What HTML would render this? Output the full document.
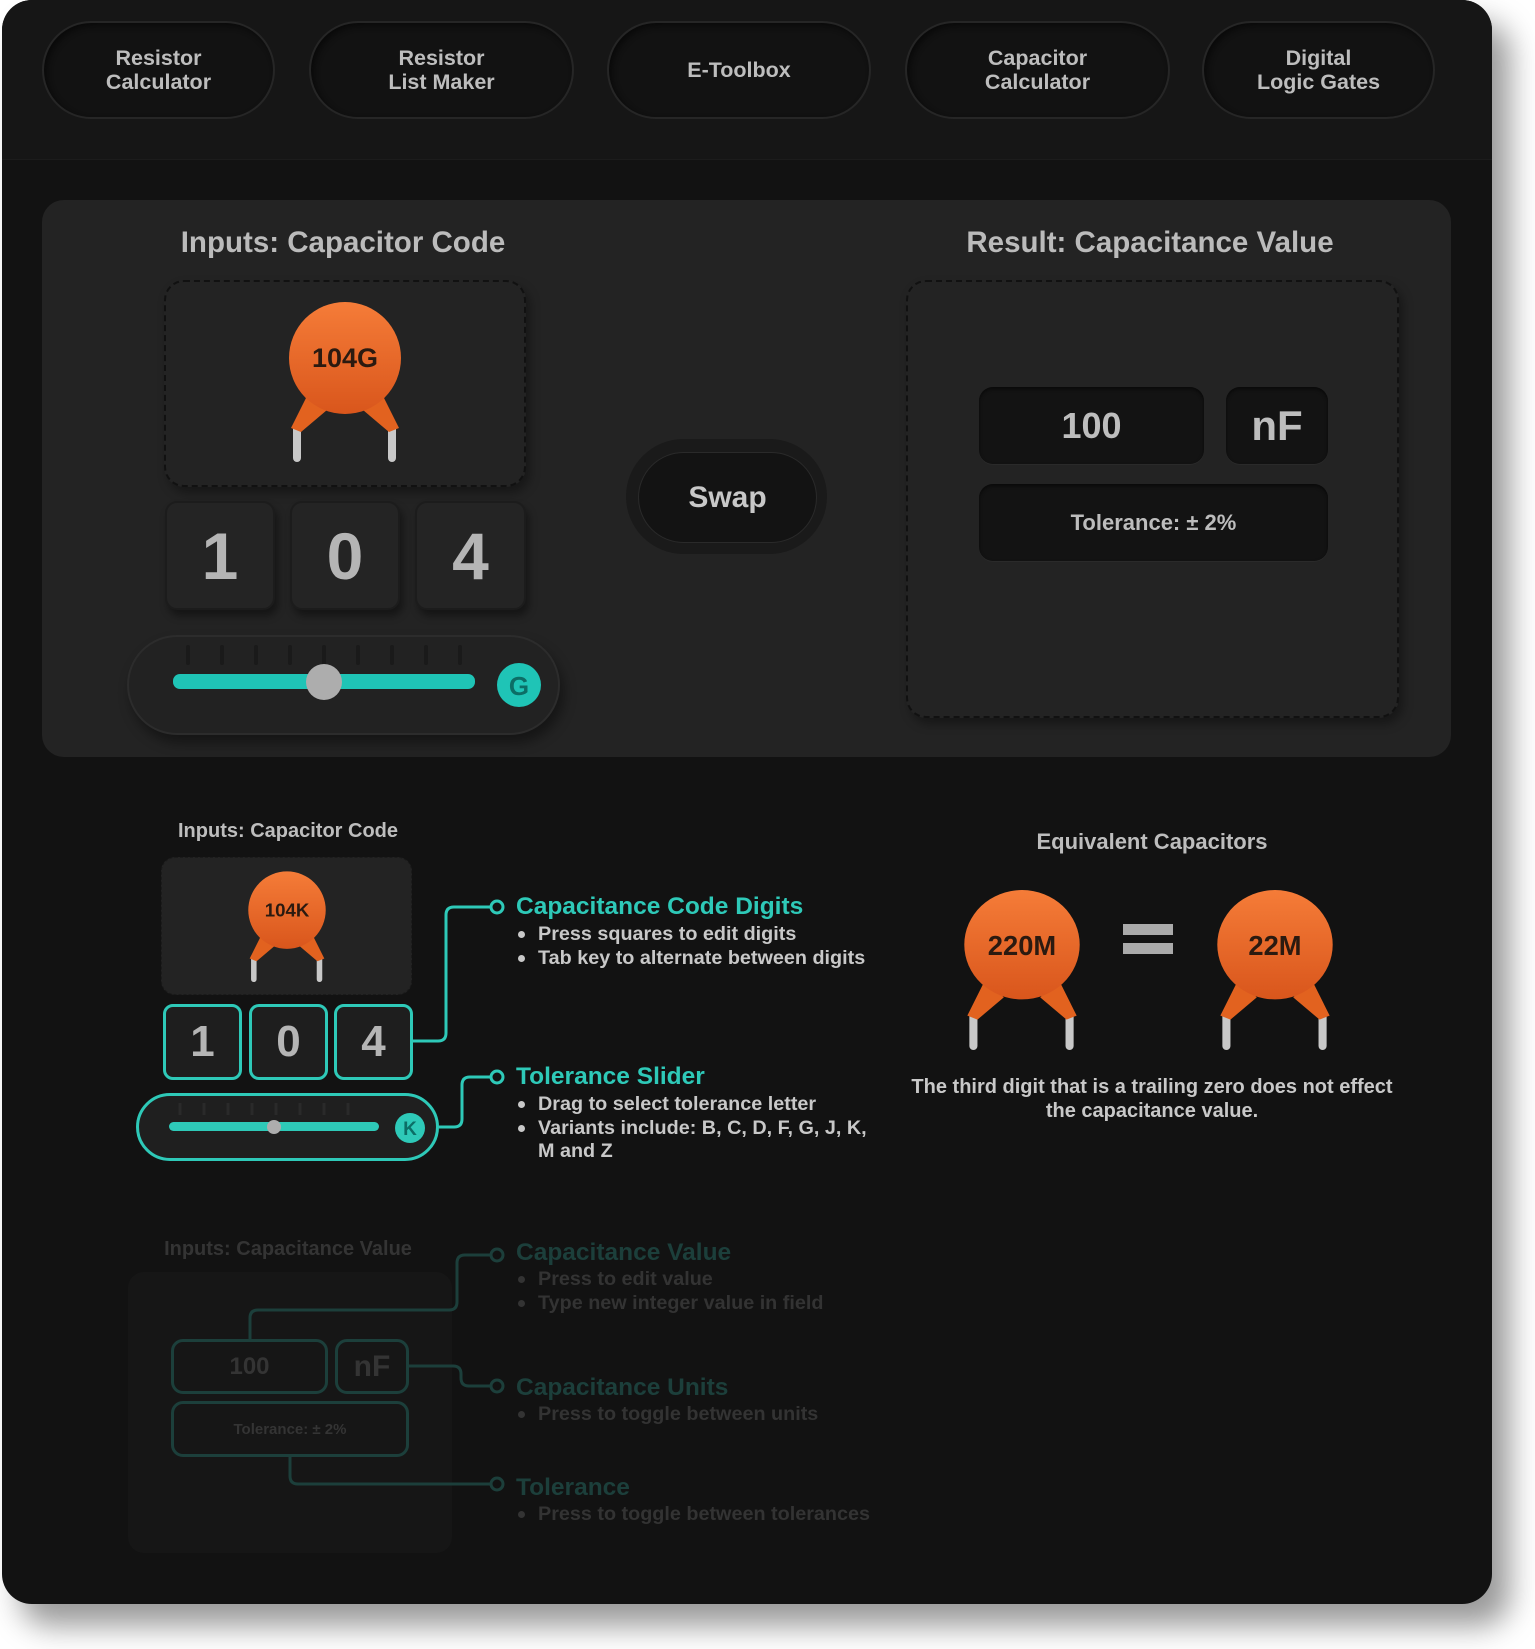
<!DOCTYPE html>
<html><head><meta charset="utf-8"><style>
*{margin:0;padding:0;box-sizing:border-box}
body{width:1535px;height:1649px;background:#fff;position:relative;overflow:hidden;font-family:"Liberation Sans",Arial,sans-serif;font-weight:bold}
.a{position:absolute}
#win{left:2px;top:0;width:1490px;height:1604px;background:#121212;border-radius:30px;overflow:hidden;box-shadow:18px 22px 30px rgba(0,0,0,.4)}
#hdr{left:0;top:0;width:1490px;height:160px;background:#161616;border-bottom:1px solid #1c1c1c}
.nav{position:absolute;top:21px;height:98px;border-radius:49px;background:#121212;border:2px solid #262626;color:#bdbdbd;font-size:21.5px;line-height:24px;display:flex;align-items:center;justify-content:center;text-align:center;box-shadow:inset 3px 3px 6px #0a0a0a}
.c{color:#bdbdbd;text-align:center}
.box{position:absolute;background:#232323;border:2px dashed #111;border-radius:20px;box-shadow:4px 6px 10px rgba(0,0,0,.35)}
.dig{position:absolute;background:#242424;border:2px solid #1c1c1c;border-radius:12px;color:#b5b5b5;font-size:66px;display:flex;align-items:center;justify-content:center;box-shadow:3px 6px 8px rgba(0,0,0,.4)}
.fld{position:absolute;background:#131313;border-radius:14px;color:#bdbdbd;display:flex;align-items:center;justify-content:center;box-shadow:inset 0 2px 3px #0a0a0a,0 1px 0 #2a2a2a}
.tl{position:absolute;color:#2ec9b8;font-size:24.5px}
.bl{position:absolute;color:#c8c8c8;font-size:19.8px;line-height:23.5px}
.bl div{position:relative}
.bl div::before{content:"";position:absolute;left:-20px;top:8px;width:7px;height:7px;border-radius:50%;background:currentColor}
.sd{position:absolute;border:3px solid #2ec9b8;border-radius:10px;color:#b5b5b5;font-size:44px;display:flex;align-items:center;justify-content:center;background:#1e1e1e}
.fd{color:#343434}
</style></head><body>
<div id="win" class="a">
<div id="hdr" class="a"></div>
<div class="nav" style="left:40px;width:233px">Resistor<br>Calculator</div>
<div class="nav" style="left:307px;width:265px">Resistor<br>List Maker</div>
<div class="nav" style="left:605px;width:264px">E-Toolbox</div>
<div class="nav" style="left:903px;width:265px">Capacitor<br>Calculator</div>
<div class="nav" style="left:1200px;width:233px">Digital<br>Logic Gates</div>

<div class="a" style="left:40px;top:200px;width:1409px;height:557px;background:#232323;border-radius:22px"></div>
<div class="a c" style="left:40px;width:602px;top:226px;font-size:29.5px;color:#bbb">Inputs: Capacitor Code</div>
<div class="a c" style="left:845px;width:606px;top:226px;font-size:29.5px;color:#bbb">Result: Capacitance Value</div>

<div class="box" style="left:162px;top:280px;width:362px;height:207px"></div>
<svg class="a" style="left:283px;top:300px" width="120" height="162" viewBox="0 0 120 162">
<defs><linearGradient id="og" x1="0" y1="0" x2="0" y2="1"><stop offset="0" stop-color="#f57c38"/><stop offset="1" stop-color="#d9561c"/></linearGradient></defs>
<rect x="8" y="124" width="8" height="38" rx="4" fill="#c8c8c8"/><rect x="103" y="124" width="8" height="38" rx="4" fill="#c8c8c8"/>
<polygon points="24,92 42,110 16,132 6,128" fill="#e2621f"/><polygon points="96,92 78,110 104,132 114,128" fill="#e2621f"/>
<circle cx="60" cy="58" r="56" fill="url(#og)"/>
<text x="60" y="67" text-anchor="middle" font-family="Liberation Sans" font-weight="bold" font-size="27" fill="#2b1a10">104G</text></svg>

<div class="dig" style="left:163px;top:501px;width:110px;height:109px">1</div>
<div class="dig" style="left:288px;top:501px;width:110px;height:109px">0</div>
<div class="dig" style="left:413px;top:501px;width:111px;height:109px">4</div>

<div class="a" style="left:125px;top:635px;width:433px;height:100px;border-radius:50px;background:#222;border:2px solid #2c2c2c;box-shadow:4px 8px 12px rgba(0,0,0,.4)"></div>
<svg class="a" style="left:125px;top:635px" width="433" height="100">
<g stroke="#1a1a1a" stroke-width="4" stroke-linecap="round">
<line x1="61" y1="12" x2="61" y2="28"/><line x1="95" y1="12" x2="95" y2="28"/><line x1="129" y1="12" x2="129" y2="28"/><line x1="163" y1="12" x2="163" y2="28"/><line x1="197" y1="12" x2="197" y2="28"/><line x1="231" y1="12" x2="231" y2="28"/><line x1="265" y1="12" x2="265" y2="28"/><line x1="299" y1="12" x2="299" y2="28"/><line x1="333" y1="12" x2="333" y2="28"/></g>
<rect x="46" y="39" width="302" height="15" rx="7" fill="#1fc4b6"/>
<circle cx="197" cy="47" r="18" fill="#adadad"/>
<circle cx="392" cy="50" r="22" fill="#1fc4b6"/>
<text x="392" y="60" text-anchor="middle" font-family="Liberation Sans" font-weight="bold" font-size="26" fill="#0c6e66">G</text></svg>

<div class="a" style="left:624px;top:439px;width:201px;height:115px;border-radius:58px;background:#1a1a1a"></div>
<div class="a" style="left:636px;top:452px;width:179px;height:91px;border-radius:46px;background:#131313;border:1px solid #2a2a2a;color:#c8c8c8;font-size:30px;display:flex;align-items:center;justify-content:center">Swap</div>

<div class="box" style="left:904px;top:280px;width:493px;height:438px"></div>
<div class="fld" style="left:977px;top:387px;width:225px;height:77px;font-size:36px">100</div>
<div class="fld" style="left:1224px;top:387px;width:102px;height:77px;font-size:42px">nF</div>
<div class="fld" style="left:977px;top:484px;width:349px;height:77px;font-size:22px">Tolerance: ± 2%</div>

<!-- help section -->
<div class="a c" style="left:124px;width:324px;top:820px;font-size:20px">Inputs: Capacitor Code</div>
<div class="a" style="left:159px;top:857px;width:251px;height:138px;background:#232323;border-radius:14px;border:1px dashed #1a1a1a"></div>
<svg class="a" style="left:243px;top:870px" width="84" height="112" viewBox="0 0 120 162">
<rect x="8" y="124" width="8" height="38" rx="4" fill="#c8c8c8"/><rect x="103" y="124" width="8" height="38" rx="4" fill="#c8c8c8"/>
<polygon points="24,92 42,110 16,132 6,128" fill="#e2621f"/><polygon points="96,92 78,110 104,132 114,128" fill="#e2621f"/>
<circle cx="60" cy="58" r="56" fill="url(#og)"/>
<text x="60" y="67" text-anchor="middle" font-family="Liberation Sans" font-weight="bold" font-size="27" fill="#2b1a10">104K</text></svg>
<div class="sd" style="left:161px;top:1004px;width:79px;height:76px">1</div>
<div class="sd" style="left:247px;top:1004px;width:79px;height:76px">0</div>
<div class="sd" style="left:332px;top:1004px;width:79px;height:76px">4</div>
<div class="a" style="left:134px;top:1093px;width:303px;height:68px;border:3px solid #2ec9b8;border-radius:34px;background:#1f1f1f"></div>
<svg class="a" style="left:134px;top:1093px" width="303" height="68">
<g stroke="#2a2a2a" stroke-width="3"><line x1="44" y1="10" x2="44" y2="22"/><line x1="68" y1="10" x2="68" y2="22"/><line x1="92" y1="10" x2="92" y2="22"/><line x1="116" y1="10" x2="116" y2="22"/><line x1="140" y1="10" x2="140" y2="22"/><line x1="164" y1="10" x2="164" y2="22"/><line x1="188" y1="10" x2="188" y2="22"/><line x1="212" y1="10" x2="212" y2="22"/></g>
<rect x="33" y="29" width="210" height="9" rx="4.5" fill="#2ec9b8"/><circle cx="138" cy="34" r="7" fill="#adadad"/>
<circle cx="274" cy="35" r="15" fill="#2ec9b8"/><text x="274" y="42" text-anchor="middle" font-family="Liberation Sans" font-weight="bold" font-size="19" fill="#0c6e66">K</text></svg>

<div class="tl" style="left:514px;top:893px">Capacitance Code Digits</div>
<div class="bl" style="left:536px;top:923px"><div>Press squares to edit digits</div><div>Tab key to alternate between digits</div></div>
<div class="tl" style="left:514px;top:1063px">Tolerance Slider</div>
<div class="bl" style="left:536px;top:1093px;width:350px"><div>Drag to select tolerance letter</div><div>Variants include: B, C, D, F, G, J, K,<br>M and Z</div></div>

<div class="a c" style="left:900px;width:500px;top:829px;font-size:22px">Equivalent Capacitors</div>
<svg class="a" style="left:958px;top:886px" width="124" height="164" viewBox="0 0 120 162">
<rect x="8" y="124" width="8" height="38" rx="4" fill="#c8c8c8"/><rect x="103" y="124" width="8" height="38" rx="4" fill="#c8c8c8"/>
<polygon points="24,92 42,110 16,132 6,128" fill="#e2621f"/><polygon points="96,92 78,110 104,132 114,128" fill="#e2621f"/>
<ellipse cx="60" cy="58" rx="57" ry="54" fill="url(#og)"/>
<text x="60" y="68" text-anchor="middle" font-family="Liberation Sans" font-weight="bold" font-size="27" fill="#2b1a10">220M</text></svg>
<div class="a" style="left:1121px;top:924px;width:50px;height:11px;background:#aaa"></div>
<div class="a" style="left:1121px;top:943px;width:50px;height:11px;background:#aaa"></div>
<svg class="a" style="left:1211px;top:886px" width="124" height="164" viewBox="0 0 120 162">
<rect x="8" y="124" width="8" height="38" rx="4" fill="#c8c8c8"/><rect x="103" y="124" width="8" height="38" rx="4" fill="#c8c8c8"/>
<polygon points="24,92 42,110 16,132 6,128" fill="#e2621f"/><polygon points="96,92 78,110 104,132 114,128" fill="#e2621f"/>
<ellipse cx="60" cy="58" rx="57" ry="54" fill="url(#og)"/>
<text x="60" y="68" text-anchor="middle" font-family="Liberation Sans" font-weight="bold" font-size="27" fill="#2b1a10">22M</text></svg>
<div class="a c" style="left:870px;width:560px;top:1075px;font-size:20px;line-height:24px;color:#c8c8c8">The third digit that is a trailing zero does not effect<br>the capacitance value.</div>

<!-- faded -->
<div class="a c fd" style="left:124px;width:324px;top:1238px;font-size:20px">Inputs: Capacitance Value</div>
<div class="a" style="left:126px;top:1272px;width:324px;height:281px;background:#161616;border-radius:16px"></div>
<svg class="a" style="left:0;top:0" width="1490" height="1604">
<g fill="none" stroke="#2ec9b8" stroke-width="3">
<path d="M411 1041 H436 Q444 1041 444 1033 V915 Q444 907 452 907 H489"/><circle cx="495" cy="907" r="6"/>
<path d="M437 1127 H452 Q460 1127 460 1119 V1085 Q460 1077 468 1077 H489"/><circle cx="495" cy="1077" r="6"/>
</g>
<g fill="none" stroke="#1c3f3b" stroke-width="3">
<path d="M248 1339 V1318 Q248 1310 256 1310 H447 Q455 1310 455 1302 V1263 Q455 1255 463 1255 H489"/><circle cx="495" cy="1255" r="6"/>
<path d="M407 1366 H451 Q459 1366 459 1374 V1378 Q459 1386 467 1386 H489"/><circle cx="495" cy="1386" r="6"/>
<path d="M288 1457 V1476 Q288 1484 296 1484 H489"/><circle cx="495" cy="1484" r="6"/>
</g></svg>
<div class="a fd" style="left:169px;top:1339px;width:157px;height:55px;border:3px solid #1c3f3b;border-radius:12px;font-size:24px;display:flex;align-items:center;justify-content:center">100</div>
<div class="a fd" style="left:333px;top:1339px;width:74px;height:55px;border:3px solid #1c3f3b;border-radius:12px;font-size:30px;display:flex;align-items:center;justify-content:center">nF</div>
<div class="a fd" style="left:169px;top:1401px;width:238px;height:56px;border:3px solid #1c3f3b;border-radius:12px;font-size:15px;display:flex;align-items:center;justify-content:center">Tolerance: ± 2%</div>
<div class="tl" style="left:514px;top:1239px;color:#1c3f3b">Capacitance Value</div>
<div class="bl" style="left:536px;top:1268px;color:#333"><div>Press to edit value</div><div>Type new integer value in field</div></div>
<div class="tl" style="left:514px;top:1374px;color:#1c3f3b">Capacitance Units</div>
<div class="bl" style="left:536px;top:1403px;color:#333"><div>Press to toggle between units</div></div>
<div class="tl" style="left:514px;top:1474px;color:#1c3f3b">Tolerance</div>
<div class="bl" style="left:536px;top:1503px;color:#333"><div>Press to toggle between tolerances</div></div>
</div>
</body></html>
